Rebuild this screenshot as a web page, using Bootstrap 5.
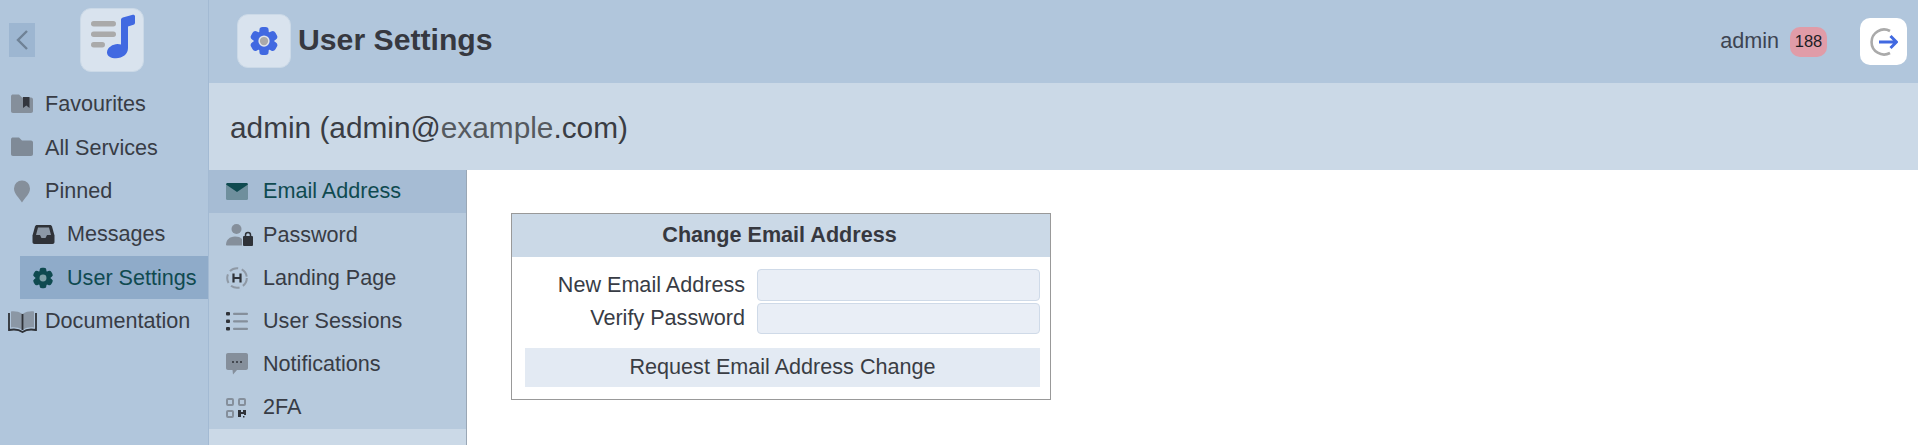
<!DOCTYPE html>
<html lang="en">
<head>
  <meta charset="UTF-8" />
  <meta name="viewport" content="width=device-width, initial-scale=1.0" />
  <title>User Settings</title>
  <link href="https://cdn.jsdelivr.net/npm/bootstrap@5.3.0/dist/css/bootstrap.min.css" rel="stylesheet" />
  <style>
    html, body { height: 100%; }
    body { font-family: "Liberation Sans", Arial, sans-serif; font-size: 21.6px; color: #383c45; background: #fff; overflow: hidden; }
    .app-shell { height: 445px; }
    svg { flex: none; }

    .side-col { width: 209px; flex: none; background: #b1c6dc; border-right: 1px solid #a3bad3; }
    .side-top { height: 83px; padding-left: 9px; padding-top: 8px; }
    .back-btn { width: 26px; height: 34px; margin-top: 15px; background: #9db6d1; }
    .logo-tile { width: 64px; height: 64px; margin-left: 45px; background: #d9e3ee; border: 1px solid #cbd9e7; border-radius: 11px; }
    .side-link { height: 43.3px; color: inherit; text-decoration: none; }
    .side-link .ico { width: 24px; margin-left: 10px; margin-right: 11px; }
    .side-link.sub { margin-left: 20px; }
    .side-link.sub .ico { margin-left: 12px; margin-right: 11px; }
    .side-link .ico.book-ico { width: 29px; margin-left: 8px; margin-right: 8px; }
    .side-link.on { background: #8fabc9; color: #0f4a50; }

    .top-bar { height: 83px; background: #b1c6dc; padding-left: 28px; }
    .page-tile { width: 54px; height: 54px; margin-top: -2px; background: #d9e3ee; border: 1px solid #cbd9e7; border-radius: 11px; }
    .page-name { font-size: 30.2px; font-weight: 700; margin: -2px 0 0 7px; color: #363840; }
    .who { font-size: 21.6px; color: #3d4452; }
    .count-pill { width: 37px; height: 30px; margin-left: 11px; margin-right: 33px; background: #e09ca8; border-radius: 10px; font-size: 16.500px; color: #1c1c24; }
    .exit-tile { width: 47px; height: 47px; margin-right: 11px; background: #fff; border-radius: 10px; }

    .sub-bar { height: 87px; background: #cbd9e7; padding-left: 21px; padding-top: 3px; font-size: 29.8px; color: #3a3d44; }
    .sub-bar span { color: #555a60; }

    .body-wrap { background: #fff; }
    .tab-col { width: 258px; flex: none; background: #cbd9e7; border-right: 1px solid #9aa7b5; }
    .tab-link { height: 43.2px; background: #b7cadd; color: inherit; text-decoration: none; padding-left: 17px; }
    .tab-link .ico { width: 24px; margin-right: 13px; }
    .tab-link.on { background: #a6bcd4; color: #0f4a50; }

    .panel-box { width: 540px; height: 187px; margin-left: 44px; margin-top: 43px; border: 1px solid #999; }
    .panel-head { height: 43px; padding-right: 3px; background: #cbd9e7; font-weight: 700; color: #36383f; }
    .panel-body { padding: 12px 10px 0 13px; }
    .field-row { margin-bottom: 2px; }
    .field-row label { width: 220px; margin-right: 12px; line-height: 1.2; text-align: right; white-space: nowrap; }
    .field-input.form-control { flex: 1; min-width: 0; height: 31.5px; padding: 0 6px; background: #e9eef6; border: 1px solid #cfdae8; border-radius: 4px; }
    .send-btn.btn { display: block; width: 100%; height: 39px; margin-top: 14px; padding: 0; background: #e3eaf3; border: 0; border-radius: 0; color: #3a3d44; font-size: 21.6px; }
  </style>
</head>

<body>
  <svg width="0" height="0" class="position-absolute">
    <defs>
      <g id="cog">
        <rect x="8.300" y=".8" width="7.400" height="22.400" rx="2.600" />
        <rect x="8.300" y=".8" width="7.400" height="22.400" rx="2.600" transform="rotate(60 12 12)" />
        <rect x="8.300" y=".8" width="7.400" height="22.400" rx="2.600" transform="rotate(120 12 12)" />
        <circle cx="12" cy="12" r="8.300" />
      </g>
    </defs>
  </svg>

  <div class="app-shell d-flex">
    <!-- left menu -->
    <div class="side-col">
      <div class="side-top d-flex">
        <div class="back-btn d-flex align-items-center justify-content-center">
          <svg width="14" height="24" viewBox="0 0 14 24"><path d="M12 3 3 12l9 9" fill="none" stroke="#6f8296" stroke-width="2.400" /></svg>
        </div>
        <div class="logo-tile d-flex">
          <svg width="62" height="62" viewBox="1 1 62 62">
            <rect x="11" y="13" width="25" height="5.500" rx="2.700" fill="#aaaaaa" />
            <rect x="11" y="23.500" width="25" height="5.500" rx="2.700" fill="#aaaaaa" />
            <rect x="11" y="34" width="14" height="5.500" rx="2.700" fill="#aaaaaa" />
            <path d="M41 12c0-1.200.6-2 1.800-2.400l10-2.900c1.200-.3 2.200.4 2.200 1.600v6.200c0 1.200-.5 1.900-1.600 2.300L48 18.500V40c0 6-5.500 10.300-12 10.300-5 0-9-2-9-5.800 0-5 6-8.500 10.500-8.500 1.300 0 2.500.2 3.500.6z" fill="#4169e1" />
          </svg>
        </div>
      </div>

      <a class="side-link d-flex align-items-center" href="#">
        <span class="ico d-flex"><svg width="24" height="22" viewBox="0 0 24 22"><path d="M1 2.500C1 1 2 .5 3 .5h6l3 3h9c1.300 0 2 1 2 2V17c0 1.300-.7 2-2 2H3c-1.300 0-2-.7-2-2z" fill="#858f9b" /><path d="M13 3h6.500v11l-3.200-2.600L13 14z" fill="#33363d" /></svg></span>
        Favourites
      </a>
      <a class="side-link d-flex align-items-center" href="#">
        <span class="ico d-flex"><svg width="24" height="22" viewBox="0 0 24 22"><path d="M1 2.500C1 1 2 .5 3 .5h6l3 3h9c1.300 0 2 1 2 2V17c0 1.300-.7 2-2 2H3c-1.300 0-2-.7-2-2z" fill="#7f8a97" /></svg></span>
        All Services
      </a>
      <a class="side-link d-flex align-items-center" href="#">
        <span class="ico d-flex justify-content-center"><svg width="18" height="23" viewBox="0 0 18 23"><path d="M9 22.500C6 17.500 1 14 1 8.500a8 8 0 0 1 16 0C17 14 12 17.500 9 22.500z" fill="#858f9b" /></svg></span>
        Pinned
      </a>
      <a class="side-link sub d-flex align-items-center" href="#">
        <span class="ico d-flex"><svg width="23" height="21" viewBox="0 0 23 21"><path d="M5 1h13c1 0 1.500.5 2 1.500l2.500 9V18c0 1.200-.8 2-2 2h-18c-1.200 0-2-.8-2-2v-6.500l2.500-9C3.500 1.500 4 1 5 1z" fill="#2f3238" /><path d="M6 3.500h11l2 7.500h-4l-1.500 3h-4L8 11H4z" fill="#8c98a6" /></svg></span>
        Messages
      </a>
      <a class="side-link sub on d-flex align-items-center" href="#">
        <span class="ico d-flex"><svg width="22" height="22" viewBox="0 0 24 24"><use href="#cog" fill="#0f4a50" /><circle cx="12" cy="12" r="3.800" fill="#7fa0a8" /></svg></span>
        User Settings
      </a>
      <a class="side-link d-flex align-items-center" href="#">
        <span class="ico book-ico d-flex"><svg width="29" height="23" viewBox="0 0 29 23"><path d="M14.500 4C11 1.500 6 1 3 1.500v16c3.500-.5 8 0 11.500 2.500C18 17.500 22.500 17 26 17.500v-16C23 1 18 1.500 14.500 4z" fill="#8b97a5" /><path d="M1 3v17c5-1 10-.5 13.500 2 3.500-2.500 8.500-3 13.500-2V3M14.500 4v16" fill="none" stroke="#2f3238" stroke-width="1.800" /></svg></span>
        Documentation
      </a>
    </div>

    <div class="flex-grow-1 d-flex flex-column">
      <div class="top-bar d-flex align-items-center">
        <div class="page-tile d-flex align-items-center justify-content-center">
          <svg width="30" height="30" viewBox="0 0 24 24"><use href="#cog" fill="#4169e1" /><circle cx="12" cy="12" r="4.500" fill="#dfe4ea" /><circle cx="12" cy="12" r="3.300" fill="#a9a9a9" /></svg>
        </div>
        <h1 class="page-name">User Settings</h1>
        <div class="ms-auto d-flex align-items-center">
          <span class="who">admin</span>
          <span class="count-pill d-flex align-items-center justify-content-center">188</span>
          <div class="exit-tile d-flex align-items-center justify-content-center">
            <svg width="28" height="28" viewBox="0 0 28 28">
              <path d="M20 3A12.500 12.500 0 1 0 20 25" fill="none" stroke="#aaaaaa" stroke-width="2.600" />
              <path d="M9 14h17M20.500 8 26.500 14l-6 6" fill="none" stroke="#4169e1" stroke-width="3" />
            </svg>
          </div>
        </div>
      </div>

      <div class="sub-bar d-flex align-items-center">admin (admin@<span>example</span>.com)</div>

      <div class="body-wrap flex-grow-1 d-flex">
        <div class="tab-col">
          <a class="tab-link on d-flex align-items-center" href="#">
            <span class="ico d-flex"><svg width="22" height="17" viewBox="0 0 22 17"><rect y="1" width="22" height="16" rx="1.500" fill="#6f8f9d" /><path d="M0 1.500C0 .7.700 0 1.500 0h19c.8 0 1.500.7 1.500 1.500L11 9z" fill="#0f4a50" /></svg></span>
            Email Address
          </a>
          <a class="tab-link d-flex align-items-center" href="#">
            <span class="ico d-flex"><svg width="27" height="22" viewBox="0 0 27 22"><circle cx="10.500" cy="5" r="5" fill="#858f9b" /><path d="M0 21c0-5 3.500-8.500 9-8.500 3 0 5.500.8 7 2.500v6.500H1c-.6 0-1-.4-1-.5z" fill="#858f9b" /><rect x="17" y="12" width="10" height="10" rx="1" fill="#2f3238" /><path d="M19.500 12.500V11a2.500 2.500 0 0 1 5 0v1.500" fill="none" stroke="#2f3238" stroke-width="1.500" /></svg></span>
            Password
          </a>
          <a class="tab-link d-flex align-items-center" href="#">
            <span class="ico d-flex"><svg width="22" height="22" viewBox="0 0 22 22"><circle cx="11" cy="11" r="9.800" fill="none" stroke="#8f99a5" stroke-width="2" stroke-dasharray="9 3.700" /><path d="M7.500 6.500v9M14.500 6.500v9M7.500 11h7" fill="none" stroke="#2f3238" stroke-width="2.200" /></svg></span>
            Landing Page
          </a>
          <a class="tab-link d-flex align-items-center" href="#">
            <span class="ico d-flex"><svg width="22" height="19" viewBox="0 0 22 19"><g fill="#2f3238"><rect y="0" width="4" height="3.600" rx="1" /><rect y="7.500" width="4" height="3.600" rx="1" /><rect y="15" width="4" height="3.600" rx="1" /></g><g fill="#858f9b"><rect x="7" y=".7" width="15" height="2.200" rx="1" /><rect x="7" y="8.200" width="15" height="2.200" rx="1" /><rect x="7" y="15.700" width="15" height="2.200" rx="1" /></g></svg></span>
            User Sessions
          </a>
          <a class="tab-link d-flex align-items-center" href="#">
            <span class="ico d-flex"><svg width="22" height="22" viewBox="0 0 22 22"><path d="M2 0h18c1.200 0 2 .8 2 2v13c0 1.200-.8 2-2 2H11l-4 4.500-.5-4.500H2c-1.200 0-2-.8-2-2V2C0 .8.800 0 2 0z" fill="#858f9b" /><g fill="#2f3238"><circle cx="7" cy="9" r="1" /><circle cx="11" cy="9" r="1" /><circle cx="15" cy="9" r="1" /></g></svg></span>
            Notifications
          </a>
          <a class="tab-link d-flex align-items-center" href="#">
            <span class="ico d-flex"><svg width="20" height="20" viewBox="0 0 20 20"><g fill="none" stroke="#858f9b" stroke-width="2"><rect x="1" y="1" width="6" height="6" rx="1" /><rect x="13" y="1" width="6" height="6" rx="1" /><rect x="1" y="13" width="6" height="6" rx="1" /></g><path d="M12 12h3v2h2v-2h3v5h-2v-1h-3v3h-3z" fill="#2f3238" /><rect x="17" y="18" width="1.500" height="1.500" fill="#2f3238" /></svg></span>
            2FA
          </a>
        </div>

        <form class="panel-box" onsubmit="return false">
          <div class="panel-head d-flex align-items-center justify-content-center">Change Email Address</div>
          <div class="panel-body">
            <div class="field-row d-flex align-items-center">
              <label for="newEmail">New Email Address</label>
              <input class="field-input form-control" type="text" id="newEmail">
            </div>
            <div class="field-row d-flex align-items-center">
              <label for="verifyPw">Verify Password</label>
              <input class="field-input form-control" type="password" id="verifyPw">
            </div>
            <button class="send-btn btn" type="submit">Request Email Address Change</button>
          </div>
        </form>
      </div>
    </div>
  </div>

  <script src="https://cdn.jsdelivr.net/npm/bootstrap@5.3.0/dist/js/bootstrap.bundle.min.js"></script>
</body>
</html>
